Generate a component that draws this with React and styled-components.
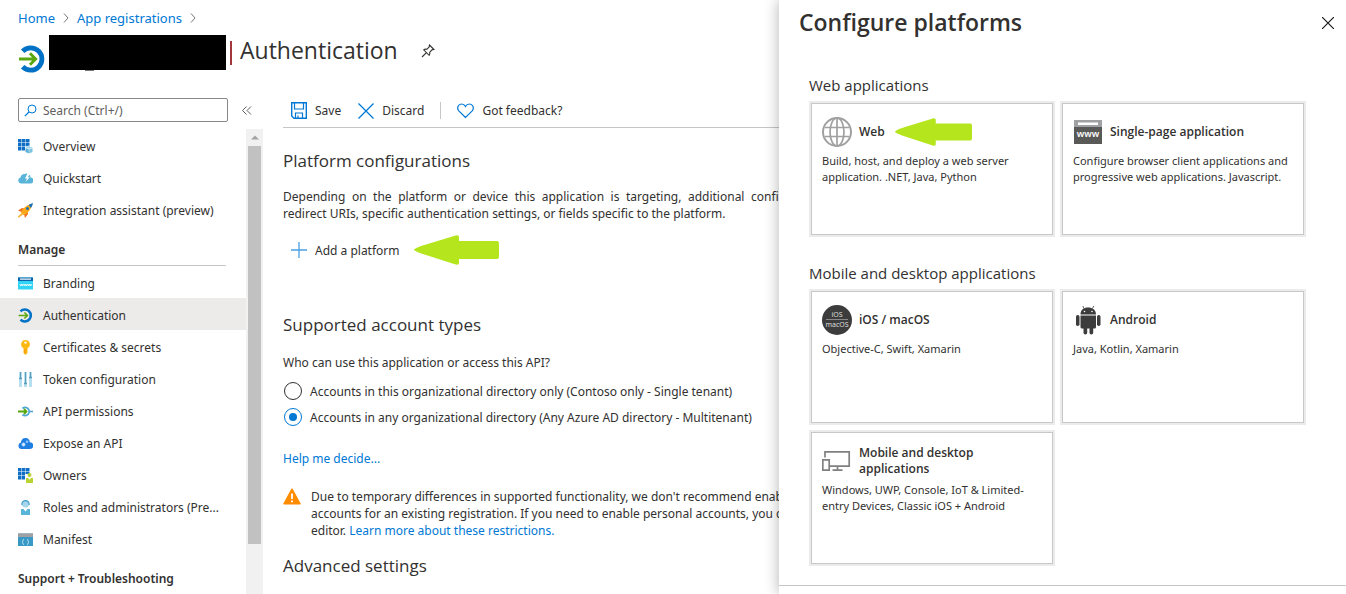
import React from "react";
import styled, { createGlobalStyle } from "styled-components";

const GlobalStyle = createGlobalStyle`
  *, *::before, *::after { box-sizing: border-box; }
  body {
    margin: 0;
    background: #fff;
    color: #323130;
    font-family: "Segoe UI", "Noto Sans", "Open Sans", sans-serif;
    font-size: 12px;
    line-height: 17px;
  }
  button, input { font: inherit; color: inherit; }
  h1, h2, h3, p, ul { margin: 0; padding: 0; }
  h1, h2, h3 { font-family: "Segoe UI", "Open Sans", "Noto Sans", sans-serif; }
  a { color: #0078d4; text-decoration: none; }
  svg { display: block; flex: none; }
`;

const Page = styled.div`
  position: relative;
  display: flex;
  flex-direction: column;
  height: 100vh;
  overflow: hidden;
`;

const Breadcrumb = styled.nav`
  display: flex;
  align-items: center;
  gap: 8px;
  padding: 9px 18px 0;
  height: 27px;
  font-size: 13px;
`;

const TitleRow = styled.header`
  display: flex;
  align-items: flex-start;
  height: 66px;
  padding: 8px 18px 0;
`;

const AppLogo = styled.div`
  margin: 10px 3px 0 0;
`;

const Redacted = styled.span`
  position: relative;
  width: 177px;
  height: 35px;
  background: #000;

  &::after {
    content: "";
    position: absolute;
    left: 36px;
    top: 100%;
    width: 9px;
    height: 1px;
    background: #777;
  }
`;

const Divider = styled.span`
  width: 2px;
  height: 24px;
  margin: 6px 8px 0 4px;
  background: #a4373a;
`;

const PageTitle = styled.h1`
  font-size: 23px;
  line-height: 30px;
  font-weight: 400;
`;

const IconButton = styled.button`
  display: flex;
  align-items: center;
  justify-content: center;
  width: 24px;
  height: 24px;
  padding: 0;
  border: 0;
  background: none;
  cursor: pointer;
`;

const PinSlot = styled.div`
  margin: 4px 0 0 18px;
`;

const Body = styled.div`
  display: flex;
  flex: 1;
  min-height: 0;
`;

const Sidebar = styled.aside`
  display: flex;
  flex-direction: column;
  flex: none;
  width: 263px;
  min-height: 0;
`;

const SearchRow = styled.div`
  display: flex;
  align-items: center;
  gap: 7px;
  height: 36px;
  padding: 5px 0 7px 18px;
`;

const SearchBox = styled.label`
  display: flex;
  align-items: center;
  gap: 6px;
  width: 210px;
  height: 24px;
  padding: 0 5px;
  border: 1px solid #8a8886;
  border-radius: 2px;
`;

const SearchInput = styled.input`
  flex: 1;
  min-width: 0;
  padding: 0;
  border: 0;
  outline: 0;
  background: none;
  &::placeholder { color: #605e5c; opacity: 1; }
`;

const NavArea = styled.div`
  display: flex;
  flex: 1;
  min-height: 0;
`;

const NavScroll = styled.nav`
  flex: 1;
  min-width: 0;
  overflow: hidden;
`;

const NavList = styled.ul`
  list-style: none;
`;

const NavLink = styled.a`
  display: flex;
  align-items: center;
  gap: 10px;
  height: 32px;
  padding: 2px 18px 0 18px;
  color: #323130;
  white-space: nowrap;
  background: ${(p) => (p.$active ? "#edebe9" : "transparent")};
`;

const NavHeading = styled.h3`
  height: 41px;
  margin: 0 20px 0 18px;
  padding-top: 16px;
  border-bottom: 1px solid #c8c6c4;
  font-family: inherit;
  font-size: 12px;
  font-weight: 600;
`;

const ScrollTrack = styled.div`
  display: flex;
  flex-direction: column;
  align-items: center;
  width: 17px;
  background: #f1f1f1;
`;

const ScrollArrow = styled.div`
  display: flex;
  align-items: center;
  height: 17px;
`;

const ScrollThumb = styled.div`
  width: 13px;
  height: 88%;
  max-height: 398px;
  background: #c1c1c1;
`;

const Main = styled.main`
  flex: 1;
  min-width: 0;
  padding-left: 20px;
  overflow: hidden;
`;

const Toolbar = styled.div`
  display: flex;
  align-items: center;
  height: 35px;
  padding: 1px 0 0 8px;
  border-bottom: 1px solid #c8c6c4;
`;

const Command = styled.button`
  display: flex;
  align-items: center;
  gap: 8px;
  height: 24px;
  margin-right: ${(p) => p.$after || 0}px;
  padding: 0;
  border: 0;
  background: none;
  white-space: nowrap;
  cursor: pointer;
`;

const Separator = styled.span`
  width: 1px;
  height: 17px;
  margin-right: 16px;
  background: #c8c6c4;
`;

const SectionTitle = styled.h2`
  margin-top: ${(p) => p.$top}px;
  font-size: 17px;
  line-height: 24px;
  font-weight: 400;
`;

const Intro = styled.p`
  width: 544px;
  margin-top: 15px;
  text-align: justify;
`;

const AddRow = styled.div`
  display: flex;
  align-items: center;
  gap: 14px;
  height: 30px;
  margin-top: 13px;
  padding-left: 8px;
`;

const Choices = styled.fieldset`
  margin: 17px 0 0;
  padding: 0;
  border: 0;
`;

const Legend = styled.legend`
  padding: 0;
  margin-bottom: 7px;
`;

const Choice = styled.label`
  display: flex;
  align-items: center;
  gap: 8px;
  height: 26px;
  padding-left: 1px;
  white-space: nowrap;
`;

const Radio = styled.input`
  appearance: none;
  display: grid;
  place-items: center;
  flex: none;
  width: 18px;
  height: 18px;
  margin: 0;
  border: 1px solid #323130;
  border-radius: 50%;
  background: #fff;

  &:checked { border-color: #0078d4; }
  &:checked::before {
    content: "";
    width: 8px;
    height: 8px;
    border-radius: 50%;
    background: #0078d4;
  }
`;

const Help = styled.p`
  margin-top: 20px;
`;

const Warning = styled.div`
  display: flex;
  gap: 10px;
  margin-top: 21px;
  white-space: nowrap;
`;

const Panel = styled.section`
  position: absolute;
  top: 0;
  right: 0;
  bottom: 0;
  display: flex;
  flex-direction: column;
  width: 567px;
  max-width: 100%;
  background: #fff;
  box-shadow: 0 0 14px rgba(0, 0, 0, 0.3);
`;

const PanelHeader = styled.header`
  display: flex;
  align-items: center;
  justify-content: space-between;
  height: 46px;
  padding: 0 6px 0 20px;
`;

const PanelTitle = styled.h2`
  font-size: 23px;
  line-height: 32px;
  padding-bottom: 2px;
  font-weight: 600;
`;

const PanelBody = styled.div`
  flex: 1;
  padding: 27px 20px 0 32px;
`;

const PanelFooter = styled.footer`
  height: 9px;
  border-top: 1px solid #c8c6c4;
`;

const GroupTitle = styled.h3`
  margin: ${(p) => p.$top || 0}px 0 6px -2px;
  font-size: 15px;
  line-height: 24px;
  font-weight: 400;
`;

const CardGrid = styled.div`
  display: grid;
  grid-template-columns: repeat(auto-fill, 242px);
  gap: 9px;
`;

const Card = styled.button`
  display: flex;
  flex-direction: column;
  align-items: stretch;
  justify-content: flex-start;
  min-height: 132px;
  padding: 12px 8px 8px 10px;
  border: 1px solid #c8c8c8;
  background: #fff;
  box-shadow: 0 0 0 2px #ebebeb;
  font-size: 11px;
  line-height: 16px;
  text-align: left;
  cursor: pointer;
`;

const CardHead = styled.span`
  display: flex;
  align-items: center;
  gap: 7px;
  height: 32px;
  margin-bottom: 5px;
`;

const CardTitle = styled.strong`
  max-width: 150px;
  font-family: "Segoe UI", "Open Sans", "Noto Sans", sans-serif;
  font-size: 12px;
  font-weight: 600;
`;

const ArrowShape = styled.svg`
  margin-left: ${(p) => p.$left || 0}px;
`;

const Arrow = ({ width, height, left }) => (
  <ArrowShape $left={left} width={width} height={height} viewBox="0 0 85 30" preserveAspectRatio="none" aria-hidden="true">
    <path d="M0 14.500Q3 12 12 9.500L40 1Q45 -1 45 2V6H83Q85 6 85 8V22Q85 24 83 24H45V28Q45 31 40 29L12 20Q3 17.500 0 15Z" fill="#b5e61d" />
  </ArrowShape>
);

const Svg = ({ w = 15, h = 15, box, children }) => (
  <svg width={w} height={h} viewBox={box || `0 0 ${w} ${h}`} fill="none" aria-hidden="true">
    {children}
  </svg>
);

const Chevron = () => (
  <Svg w={6} h={10}><path d="M1 .5l4 4.500-4 4.500" stroke="#797775" /></Svg>
);

const AuthIcon = ({ size = 15 }) => (
  <Svg w={size} h={size} box="0 0 27 27">
    <path d="M4.500 6A10.800 10.800 0 1 1 4.500 21" stroke="#0072c6" strokeWidth="4.600" />
    <path d="M1 13.500H17M11.500 8L17 13.500L11.500 19" stroke="#59a80f" strokeWidth="2.800" />
  </Svg>
);

const TileGrid = () =>
  [0, 4, 8].map((y) => [0, 4, 8].map((x) => (
    <rect key={`${x}-${y}`} x={x} y={y} width="3.500" height="3.500" fill="#0f6fc4" />
  )));

const icons = {
  overview: (
    <Svg>
      <TileGrid />
      <path d="M11 6.500l4 1.500v5L11 15l-4-2V8z" fill="#fff" />
      <path d="M11 7l3.500 1.500L11 10 7.500 8.500z" fill="#a5d6ec" />
      <path d="M7.500 9l3.300 1.500v4L7.500 13z" fill="#5ab0d8" />
      <path d="M14.500 9l-3.300 1.500v4L14.500 13z" fill="#7cc3e3" />
    </Svg>
  ),
  quickstart: (
    <Svg>
      <path d="M3 12.500A3 3 0 0 1 2.500 6.600 4.300 4.300 0 0 1 6.500 3C8 2.200 12 2 12.500 6.500A3 3 0 0 1 12.300 12.500z" fill="#59b4d9" />
      <path d="M9.500 2.500L7 7.500H9L7.500 11 11.800 6.300H9.800L12 2.500z" fill="#fff" />
    </Svg>
  ),
  rocket: (
    <Svg>
      <path d="M0 7.500L4 5 7 5.500 3.500 9zM9.500 8L10 11 7 15 6 11z" fill="#f2711c" />
      <path d="M3 9.500C5 5 9 1.500 14 1 13.500 6 10 10 5.500 12z" fill="#fba919" />
      <path d="M10.500 2Q12 1 15 0 14.500 3 13 5z" fill="#1b6fb5" />
      <circle cx="9.500" cy="5.500" r="1.500" fill="#1b6fb5" />
      <path d="M3.500 10L5 11.500 1 14.500 0 14.500 0 13.500z" fill="#f9b233" />
    </Svg>
  ),
  branding: (
    <Svg>
      <path d="M0 1.500h15v12H0z" fill="#32d4f5" />
      <path d="M0 1.500h15v3.500H0z" fill="#0d63ac" />
      <path d="M2 2.500h11v1.200H2z" fill="#fff" />
      <path d="M2 8l.9 2 .9-2 .9 2 .9-2M6 8l.9 2 .9-2 .9 2 .9-2M10 8l.9 2 .9-2 .9 2 .9-2" stroke="#fff" strokeWidth=".8" />
    </Svg>
  ),
  auth: <AuthIcon />,
  key: (
    <Svg>
      <path d="M7.500 0A4.400 4.400 0 0 1 9.500 8.300V13L7.500 15 5.500 13V8.300A4.400 4.400 0 0 1 7.500 0z" fill="#fdb813" />
      <circle cx="7.500" cy="2.600" r="1.200" fill="#fff" />
      <path d="M7 9v4.500" stroke="#e88b00" strokeWidth=".8" />
    </Svg>
  ),
  sliders: (
    <Svg>
      <path d="M1 0h3v15H1zM6 0h3v15H6zM11 0h3v15H11z" fill="#b8dff0" />
      <path d="M2.500 0v7M7.500 0v11M12.500 0v6" stroke="#5b9db8" />
      <path d="M1 6.500h3M6 11.500h3M11 5.500h3" stroke="#5b9db8" strokeWidth="1.500" />
    </Svg>
  ),
  permissions: (
    <Svg>
      <path d="M4.500 4.500a4 4 0 1 1 0 6" stroke="#4fa6d4" strokeWidth="1.800" />
      <path d="M11.500 7.500h3.500" stroke="#4fa6d4" strokeWidth="1.600" />
      <path d="M0 7.500h8M6 5l2.500 2.500L6 10" stroke="#59a80f" strokeWidth="1.800" />
    </Svg>
  ),
  expose: (
    <Svg>
      <path d="M3.500 13A3.300 3.300 0 0 1 3 6.500 4.300 4.300 0 0 1 7.500 2a4.500 4.500 0 0 1 4.300 4.300A3.300 3.300 0 0 1 12 13z" fill="#1f7fe0" />
      <circle cx="5.500" cy="8.500" r="1.700" fill="#d8ecff" stroke="#8ec5ff" strokeDasharray="1 .6" />
      <circle cx="9" cy="5.800" r="1.300" fill="#8ec5ff" />
    </Svg>
  ),
  owners: (
    <Svg>
      <TileGrid />
      <path d="M7 6h8v9H7z" fill="#fff" />
      <circle cx="11.500" cy="7" r="2" fill="#b8d432" />
      <path d="M8 10h2l1.500 1.700L13 10h2v5H8z" fill="#b8d432" />
    </Svg>
  ),
  roles: (
    <Svg>
      <circle cx="7.500" cy="4" r="3.500" fill="#a5d6ec" />
      <path d="M4 5a3.600 3.600 0 1 1 7 0" stroke="#3f9fca" strokeWidth="1.200" />
      <path d="M3 9h2.500l2 2.500 2-2.500H12v6H3z" fill="#59b4d9" />
    </Svg>
  ),
  manifest: (
    <Svg>
      <path d="M0 1.500h15v12.500H0z" fill="#3999c6" />
      <path d="M0 1.500h15v3.500H0z" fill="#a0a1a2" />
      <path d="M6 7.500q-1.500 0-1.200 1.500 0 1-.8 1 .8 0 .8 1-.3 1.500 1.200 1.500M9 7.500q1.500 0 1.200 1.500 0 1 .8 1-.8 0-.8 1 .3 1.500-1.200 1.500" stroke="#b7e0f2" strokeWidth=".9" />
    </Svg>
  ),
};

const topItems = [
  ["overview", "Overview"],
  ["quickstart", "Quickstart"],
  ["rocket", "Integration assistant (preview)"],
];

const manageItems = [
  ["branding", "Branding"],
  ["auth", "Authentication"],
  ["key", "Certificates & secrets"],
  ["sliders", "Token configuration"],
  ["permissions", "API permissions"],
  ["expose", "Expose an API"],
  ["owners", "Owners"],
  ["roles", "Roles and administrators (Pre..."],
  ["manifest", "Manifest"],
];

const NavItems = ({ items }) => (
  <NavList>
    {items.map(([icon, label]) => (
      <li key={icon}>
        <NavLink href="#" $active={icon === "auth"}>{icons[icon]}<span>{label}</span></NavLink>
      </li>
    ))}
  </NavList>
);

const GlobeIcon = () => (
  <Svg w={30} h={30}>
    <circle cx="15" cy="15" r="14" stroke="#a0a0a0" strokeWidth="2" />
    <ellipse cx="15" cy="15" rx="7" ry="14" stroke="#a0a0a0" strokeWidth="1.700" />
    <path d="M3 10.500h24M3 19.500h24M15 1v28" stroke="#a0a0a0" strokeWidth="1.700" />
  </Svg>
);

const BrowserIcon = () => (
  <Svg w={30} h={24}>
    <path d="M1 0h28v24H1z" fill="#595957" />
    <path d="M1 0h28v7H1z" fill="#a0a1a2" />
    <path d="M5 2.500h20v2.500H5z" fill="#fff" />
    <text x="15" y="17" textAnchor="middle" fill="#fff" fontSize="9" fontWeight="600">www</text>
  </Svg>
);

const AppleIcon = () => (
  <Svg w={30} h={30}>
    <circle cx="15" cy="15" r="15" fill="#3c3c3c" />
    <path d="M4 14.500h22" stroke="#8a8a8a" />
    <text x="15" y="12" textAnchor="middle" fill="#ddd" fontSize="7">iOS</text>
    <text x="15" y="22" textAnchor="middle" fill="#ddd" fontSize="7">macOS</text>
  </Svg>
);

const AndroidIcon = () => (
  <Svg w={30} h={30}>
    <g fill="#3c3c3c">
      <path d="M7.500 9.500C7.500 5 10.500 2.500 15 2.500S23 5 23 9.500z" />
      <path d="M7.500 10.500H23V22a1.500 1.500 0 0 1-1.500 1.500H9A1.500 1.500 0 0 1 7.500 22z" />
      <rect x="3" y="10" width="3.500" height="11" rx="1.700" />
      <rect x="24" y="10" width="3.500" height="11" rx="1.700" />
      <rect x="10.500" y="20" width="3.700" height="9.500" rx="1.800" />
      <rect x="16.500" y="20" width="3.700" height="9.500" rx="1.800" />
    </g>
    <path d="M11 3.500L9.800 1M19.500 3.500L20.700 1" stroke="#3c3c3c" strokeWidth=".8" />
    <circle cx="11.500" cy="6.500" r=".8" fill="#fff" />
    <circle cx="19" cy="6.500" r=".8" fill="#fff" />
  </Svg>
);

const DevicesIcon = () => (
  <Svg w={30} h={24}>
    <path d="M3 8.500V2.800H27.200V17.200H8" stroke="#808080" strokeWidth="1.700" />
    <path d="M.8 10.800H7.200V21.200H.8z" stroke="#808080" strokeWidth="1.700" />
    <path d="M15.500 17v4M10.500 21.200h10" stroke="#808080" strokeWidth="1.700" />
  </Svg>
);

const PlatformCard = ({ icon, title, children, marker }) => (
  <Card type="button">
    <CardHead>{icon}<CardTitle>{title}</CardTitle>{marker}</CardHead>
    <span>{children}</span>
  </Card>
);

export default function App() {
  return (
    <Page>
      <GlobalStyle />
      <Breadcrumb aria-label="Breadcrumb">
        <a href="#">Home</a><Chevron />
        <a href="#">App registrations</a><Chevron />
      </Breadcrumb>

      <TitleRow>
        <AppLogo><AuthIcon size={28} /></AppLogo>
        <Redacted />
        <Divider />
        <PageTitle>Authentication</PageTitle>
        <PinSlot>
          <IconButton type="button" aria-label="Pin">
            <Svg w={14} h={14}>
              <path d="M8.500 1l4.500 4.500-1 .3-.8-.1-2.500 2.600c.3 1.300.1 2.200-.6 3L2.700 5.900c.8-.7 1.700-.9 3-.6l2.600-2.500-.1-.8zM5.200 8.800L1 13" stroke="#323130" strokeWidth="1.100" />
            </Svg>
          </IconButton>
        </PinSlot>
      </TitleRow>

      <Body>
        <Sidebar>
          <SearchRow>
            <SearchBox>
              <Svg w={13} h={13}>
                <circle cx="8" cy="5" r="4" stroke="#0078d4" />
                <path d="M5 8L.8 12.200" stroke="#0078d4" strokeWidth="1.200" />
              </Svg>
              <SearchInput type="text" placeholder="Search (Ctrl+/)" aria-label="Search" />
            </SearchBox>
            <IconButton type="button" aria-label="Collapse menu">
              <Svg w={10} h={9}><path d="M4.500 .5l-4 4 4 4M9 .5l-4 4 4 4" stroke="#605e5c" /></Svg>
            </IconButton>
          </SearchRow>
          <NavArea>
            <NavScroll aria-label="Application menu">
              <NavItems items={topItems} />
              <NavHeading>Manage</NavHeading>
              <NavItems items={manageItems} />
              <NavHeading>Support + Troubleshooting</NavHeading>
            </NavScroll>
            <ScrollTrack>
              <ScrollArrow><Svg w={8} h={5}><path d="M0 4.500L4 .5l4 4z" fill="#a3a3a3" /></Svg></ScrollArrow>
              <ScrollThumb />
            </ScrollTrack>
          </NavArea>
        </Sidebar>

        <Main>
          <Toolbar>
            <Command type="button" $after={17}>
              <Svg w={16} h={17}>
                <path d="M.7 .7h14.600v15.600H3L.7 14z" stroke="#0078d4" strokeWidth="1.400" />
                <path d="M3.500 1v6h9V1M4.500 16v-5h7v5M7 16v-2.500" stroke="#0078d4" strokeWidth="1.200" />
              </Svg>
              Save
            </Command>
            <Command type="button" $after={16}>
              <Svg w={16} h={16}><path d="M.5 .5l15 15M15.500 .5l-15 15" stroke="#0078d4" strokeWidth="1.300" /></Svg>
              Discard
            </Command>
            <Separator />
            <Command type="button">
              <Svg w={17} h={16}>
                <path d="M8.500 14.500L1.800 7.800C-.7 4.500 1.500 1 4.500 1 6.500 1 7.800 2.200 8.500 3.500 9.200 2.200 10.500 1 12.500 1c3 0 5.200 3.500 2.700 6.800z" stroke="#0078d4" strokeWidth="1.200" />
              </Svg>
              Got feedback?
            </Command>
          </Toolbar>

          <SectionTitle $top={21}>Platform configurations</SectionTitle>
          <Intro>
            Depending on the platform or device this application is targeting, additional configuration
            redirect URIs, specific authentication settings, or fields specific to the platform.
          </Intro>
          <AddRow>
            <Command type="button">
              <Svg w={16} h={16}><path d="M8 0v16M0 8h16" stroke="#4aa0e6" strokeWidth="1.300" /></Svg>
              Add a platform
            </Command>
            <Arrow width={85} height={30} />
          </AddRow>

          <SectionTitle $top={48}>Supported account types</SectionTitle>
          <Choices>
            <Legend>Who can use this application or access this API?</Legend>
            <Choice>
              <Radio type="radio" name="accounts" />
              Accounts in this organizational directory only (Contoso only - Single tenant)
            </Choice>
            <Choice>
              <Radio type="radio" name="accounts" defaultChecked />
              Accounts in any organizational directory (Any Azure AD directory - Multitenant)
            </Choice>
          </Choices>
          <Help><a href="#">Help me decide...</a></Help>
          <Warning>
            <Svg w={18} h={17}>
              <path d="M9 1.200L17 15.800H1z" fill="#ff8c00" stroke="#ff8c00" strokeWidth="1.500" strokeLinejoin="round" />
              <path d="M9 5.500v5.500M9 12.500v1.700" stroke="#fff" strokeWidth="1.800" />
            </Svg>
            <p>
              Due to temporary differences in supported functionality, we don't recommend enabling
              <br />
              accounts for an existing registration. If you need to enable personal accounts, you can
              <br />
              editor. <a href="#">Learn more about these restrictions.</a>
            </p>
          </Warning>
          <SectionTitle $top={15}>Advanced settings</SectionTitle>
        </Main>
      </Body>

      <Panel aria-label="Configure platforms">
        <PanelHeader>
          <PanelTitle>Configure platforms</PanelTitle>
          <IconButton type="button" aria-label="Close">
            <Svg w={12} h={12}><path d="M0 0l12 12M12 0L0 12" stroke="#1b1a19" strokeWidth="1.200" /></Svg>
          </IconButton>
        </PanelHeader>
        <PanelBody>
          <GroupTitle>Web applications</GroupTitle>
          <CardGrid>
            <PlatformCard icon={<GlobeIcon />} title="Web" marker={<Arrow width={77} height={28} left={3} />}>
              Build, host, and deploy a web server application. .NET, Java, Python
            </PlatformCard>
            <PlatformCard icon={<BrowserIcon />} title="Single-page application">
              Configure browser client applications and progressive web applications. Javascript.
            </PlatformCard>
          </CardGrid>
          <GroupTitle $top={26}>Mobile and desktop applications</GroupTitle>
          <CardGrid>
            <PlatformCard icon={<AppleIcon />} title="iOS / macOS">Objective-C, Swift, Xamarin</PlatformCard>
            <PlatformCard icon={<AndroidIcon />} title="Android">Java, Kotlin, Xamarin</PlatformCard>
            <PlatformCard icon={<DevicesIcon />} title="Mobile and desktop applications">
              Windows, UWP, Console, IoT &amp; Limited-entry Devices, Classic iOS + Android
            </PlatformCard>
          </CardGrid>
        </PanelBody>
        <PanelFooter />
      </Panel>
    </Page>
  );
}
